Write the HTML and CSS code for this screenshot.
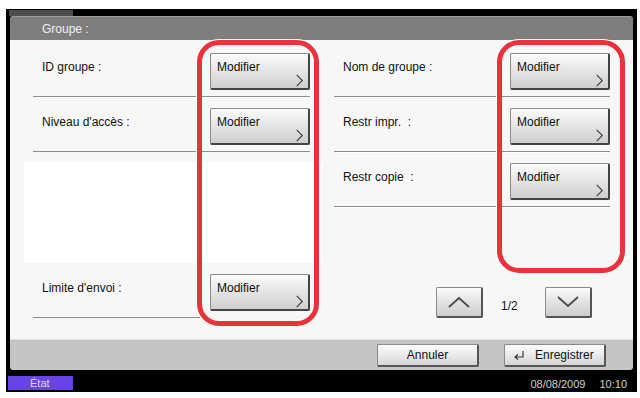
FILE: index.html
```html
<!DOCTYPE html>
<html lang="fr">
<head>
  <meta charset="UTF-8">
  <title>Groupe</title>
  <link rel="stylesheet" href="styles.css">
</head>
<body>

<div class="frame">
  <div class="tab"></div>

  <div class="panel">
    <div class="panel-head">Groupe :</div>

    <div class="panel-body">
      <div class="cols">
        <div class="col">
          <div class="row">
            <span class="label">ID groupe :</span>
            <button class="mod-btn"><span>Modifier</span><svg class="chev" width="9" height="14" viewBox="0 0 9 14"><path d="M1.5 1 L7.5 7 L1.5 13" /></svg></button>
          </div>
          <div class="row">
            <span class="label">Niveau d'accès :</span>
            <button class="mod-btn"><span>Modifier</span><svg class="chev" width="9" height="14" viewBox="0 0 9 14"><path d="M1.5 1 L7.5 7 L1.5 13" /></svg></button>
          </div>
          <div class="blank"></div>
          <div class="row row-last">
            <span class="label">Limite d'envoi :</span>
            <button class="mod-btn"><span>Modifier</span><svg class="chev" width="9" height="14" viewBox="0 0 9 14"><path d="M1.5 1 L7.5 7 L1.5 13" /></svg></button>
          </div>
        </div>

        <div class="col">
          <div class="row">
            <span class="label">Nom de groupe :</span>
            <button class="mod-btn"><span>Modifier</span><svg class="chev" width="9" height="14" viewBox="0 0 9 14"><path d="M1.5 1 L7.5 7 L1.5 13" /></svg></button>
          </div>
          <div class="row">
            <span class="label">Restr impr. &nbsp;:</span>
            <button class="mod-btn"><span>Modifier</span><svg class="chev" width="9" height="14" viewBox="0 0 9 14"><path d="M1.5 1 L7.5 7 L1.5 13" /></svg></button>
          </div>
          <div class="row">
            <span class="label">Restr copie &nbsp;:</span>
            <button class="mod-btn"><span>Modifier</span><svg class="chev" width="9" height="14" viewBox="0 0 9 14"><path d="M1.5 1 L7.5 7 L1.5 13" /></svg></button>
          </div>

          <div class="pager">
            <button class="nav-btn"><svg width="24" height="12" viewBox="0 0 24 12"><path d="M2 11 L12 2 L22 11" /></svg></button>
            <span class="page-num">1/2</span>
            <button class="nav-btn"><svg width="24" height="12" viewBox="0 0 24 12"><path d="M2 1 L12 10 L22 1" /></svg></button>
          </div>
        </div>
      </div>

      <!-- highlight marks -->
      <div class="mark mark-left"></div>
      <div class="mark mark-right"></div>
    </div>

    <div class="panel-foot">
      <button class="foot-btn">Annuler</button>
      <button class="foot-btn foot-btn-icon">
        <svg width="12" height="10" viewBox="0 0 12 10"><path d="M10 1 V7 H2.5 M5 4.5 L2 7 L5 9.5" /></svg>
        <span>Enregistrer</span>
      </button>
    </div>
  </div>

  <div class="status">
    <div class="status-tag">État</div>
    <div class="status-time"><span>08/08/2009</span><span>10:10</span></div>
  </div>
</div>

</body>
</html>
```

FILE: styles.css
```css
* {
  box-sizing: border-box;
}

body {
  margin: 0;
  background: #fff;
  font-family: 'Liberation Sans', Arial, sans-serif;
  font-size: 12px;
  color: #111;
}

.frame {
  margin: 9px 0 0 6px;
  width: 631px;
  height: 383px;
  background: #000;
  padding: 1px 4px 0 4px;
}

.tab {
  width: 64px;
  height: 6px;
  margin-left: -1px;
  background: #4d4d4d;
}

.panel {
  height: 354px;
  border-radius: 4px;
  background: #f7f7f7;
  overflow: hidden;
  display: flex;
  flex-direction: column;
}

.panel-head {
  height: 24px;
  line-height: 24px;
  padding-left: 32px;
  background: #7e7e7e;
  color: #f2f2f2;
  border-top: 1px solid #9a9a9a;
}

.panel-body {
  position: relative;
  height: 299px;
  padding: 2px 0 0 23px;
}

.cols {
  display: grid;
  grid-template-columns: 277px 276px;
  column-gap: 24px;
}

.col {
  display: flex;
  flex-direction: column;
}

.row {
  height: 55px;
  display: flex;
  justify-content: space-between;
  padding: 11px 0 0 9px;
  border-bottom: 1px solid #8c8c8c;
  box-shadow: 0 1px 0 #fff;
}

.row-last {
  border-bottom: none;
  box-shadow: none;
  position: relative;
}

.row-last::after {
  content: "";
  position: absolute;
  left: 0;
  bottom: 0;
  width: 167px;
  border-bottom: 1px solid #8c8c8c;
}

.label {
  padding-top: 7px;
}

.blank {
  height: 111px;
  margin: 0 -12px 0 -9px;
  background: linear-gradient(#f7f7f7 10px, #fff 10px);
}

button {
  font-family: inherit;
  font-size: 12px;
  color: #111;
  padding: 0;
  cursor: pointer;
}

.mod-btn {
  width: 100px;
  height: 37px;
  display: flex;
  flex-direction: column;
  align-items: flex-start;
  padding: 6px 4px 1px 6px;
  border: 1px solid #8a8a8a;
  border-right: 2px solid #444;
  border-bottom: 2px solid #444;
  border-radius: 2px;
  background: linear-gradient(#fbfbfb, #e4e4e4 50%, #cfcfcf);
}

.chev {
  margin-top: auto;
  align-self: flex-end;
}

.chev path,
.nav-btn path,
.foot-btn path {
  fill: none;
  stroke: #3a3a3a;
  stroke-width: 1.2;
}

.pager {
  display: flex;
  align-items: center;
  margin: 80px 0 0 102px;
}

.nav-btn {
  width: 47px;
  height: 31px;
  display: flex;
  align-items: center;
  justify-content: center;
  border: 1px solid #8a8a8a;
  border-right: 2px solid #555;
  border-bottom: 2px solid #555;
  border-radius: 2px;
  background: linear-gradient(#fbfbfb, #e2e2e2 50%, #cdcdcd);
}

.nav-btn path {
  stroke: #4a4a4a;
  stroke-width: 1.8;
}

.page-num {
  width: 62px;
  padding: 6px 0 0 18px;
}

.mark {
  position: absolute;
  top: 0;
  border: 5px solid #ea323c;
  border-radius: 22px;
  box-shadow: 0 0 0 1px #fff;
}

.mark-left {
  left: 187px;
  width: 122px;
  height: 286px;
}

.mark-right {
  left: 487px;
  width: 128px;
  height: 233px;
}

.panel-foot {
  height: 31px;
  display: flex;
  justify-content: flex-end;
  gap: 25px;
  padding: 4px 27px 0 0;
  background: #c5c5c5;
  border-top: 1px solid #e2e2e2;
}

.foot-btn {
  width: 102px;
  height: 23px;
  display: flex;
  align-items: center;
  justify-content: center;
  gap: 10px;
  border: 1px solid #8a8a8a;
  border-right: 2px solid #555;
  border-bottom: 2px solid #555;
  border-radius: 2px;
  background: linear-gradient(#fcfcfc, #e6e6e6 60%, #d4d4d4);
}

.foot-btn-icon {
  justify-content: flex-start;
  padding-left: 8px;
}

.status {
  display: flex;
  justify-content: space-between;
  align-items: center;
  margin-top: 6px;
  height: 14px;
}

.status-tag {
  width: 65px;
  height: 14px;
  margin-left: -2px;
  padding-left: 22px;
  line-height: 14px;
  font-size: 11px;
  background: #6a43e6;
  color: #ddd;
}

.status-time {
  display: flex;
  gap: 14px;
  padding: 2px 6px 0 0;
  font-size: 11px;
  color: #d0d0d0;
}
```
